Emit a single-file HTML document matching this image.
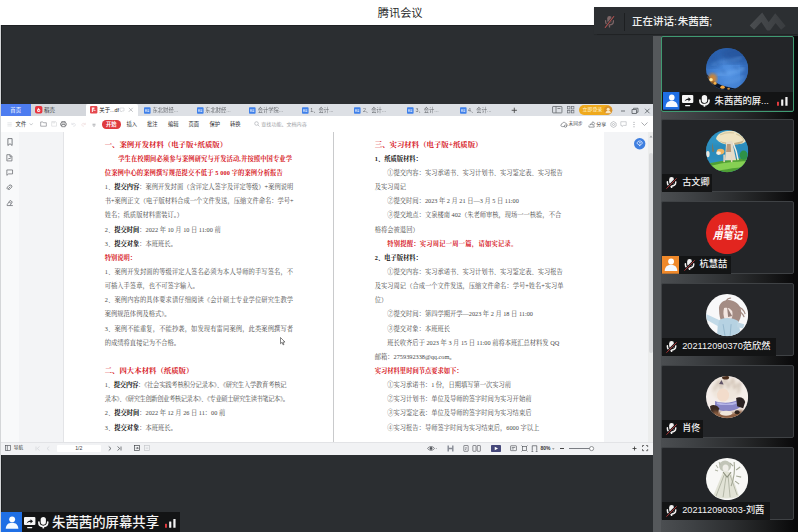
<!DOCTYPE html>
<html lang="zh"><head><meta charset="utf-8"><title>腾讯会议</title><style>
html,body{margin:0;padding:0;background:#fff}
body{font-family:"Liberation Sans","Noto Sans CJK SC",sans-serif;}
#app{position:relative;width:798px;height:532px;overflow:hidden;background:#fff}
#app div,#app svg.g,#app span{position:absolute}
#app header,#app main,#app section,#app nav,#app footer,#app aside,#app article{position:static;display:block}
#app div.tile,#app #toolbar,#app #work,#app #sharelabel,#app #speaking{position:static}
.tx{white-space:nowrap;line-height:1.3;user-select:none;font-family:"Liberation Sans","Noto Sans CJK SC",sans-serif}
article .tx{font-family:"Liberation Serif","Noto Serif CJK SC",serif}
#app .tx b{position:static;font-weight:bold;color:#0a0a0a}
.lt{white-space:nowrap}
svg.g{overflow:visible;filter:blur(.3px)}
</style></head>
<body>
<div id="app">
<svg width="0" height="0" style="position:absolute"><defs><filter id="blurA"><feGaussianBlur stdDeviation=".7"/></filter><filter id="blurB"><feGaussianBlur stdDeviation="1.600"/></filter><filter id="blurC"><feGaussianBlur stdDeviation="3.500"/></filter><radialGradient id="sky" cx=".55" cy=".6" r=".7"><stop offset="0" stop-color="#5696e6"/><stop offset=".55" stop-color="#4280d2"/><stop offset="1" stop-color="#2b65b4"/></radialGradient></defs></svg>
<header id="titlebar"><span class="tx" style="left:377.8px;top:6.13px;font-size:11.2px;color:#2a2a2a">腾讯会议</span>
</header><main id="stage"><div style="left:0px;top:25.4px;width:1px;height:506.6px;background:#d4d6d8;"></div>
<div style="left:0.9px;top:25.4px;width:797.1px;height:506.6px;background:#2b2e31;box-shadow:inset .7px .7px 0 #1c1e20;"></div>
<section id="share"><div style="left:1px;top:103.7px;width:652px;height:350.2px;background:#fff;"></div>
<nav id="tabs"><div style="left:1px;top:103.7px;width:652px;height:12.5px;background:#dde0e5;"></div>
<div style="left:1px;top:103.7px;width:30px;height:12.5px;background:#4d7cf0;"></div>
<span class="tx" style="left:10.3px;top:106.64px;font-size:5.4px;color:#fff">首页</span>
<div style="left:31px;top:103.7px;width:55px;height:12.5px;background:#d4d7dc;"></div>
<svg class="g" style="left:34.5px;top:106.3px" width="7.4" height="7.4" viewBox="0 0 20 20"><rect width="20" height="20" rx="5" fill="#e8343f"/><path d="M6 15c-1-4 1-8 5-10c-1 2 0 3 1 4c2 1 3 3 2 5c-1 2-6 3-8 1z" fill="#fff"/><circle cx="10.3" cy="12.3" r="1.8" fill="#e8343f"/></svg>
<span class="tx" style="left:44px;top:106.64px;font-size:5.4px;color:#333">稻壳</span>
<div style="left:86px;top:103.7px;width:52px;height:13px;background:#fff;border-radius:2px 2px 0 0;"></div>
<svg class="g" style="left:90.3px;top:106.2px" width="7.4" height="7.6" viewBox="0 0 20 20"><rect width="20" height="20" rx="3" fill="#e5474d"/><path d="M5 4h7v5h-4v7h-3z M9 11h6v2h-6z" fill="#fff" opacity=".9"/></svg>
<span class="tx" style="left:99.3px;top:106.64px;font-size:5.4px;color:#222">关于...df</span>
<svg class="g" style="left:119px;top:107px" width="6" height="6" viewBox="0 0 12 12" fill="none" stroke="#c9ccd1" stroke-width="1.2"><path d="M2 2h8v6h-4l-2 2v-2h-2z"/></svg>
<svg class="g" style="left:128.2px;top:107.3px" width="5.6" height="5.6" viewBox="0 0 10 10" fill="none" stroke="#9a9da2" stroke-width="1.1"><path d="M1.5 1.5l7 7M8.5 1.5l-7 7"/></svg>
<svg class="g" style="left:143.9px;top:106.5px" width="6.6" height="7" viewBox="0 0 20 20"><rect width="20" height="20" rx="2.5" fill="#3f80ea"/><path d="M4 6h4v8h-4zM10 6h6v2h-6zM10 10h6v4h-6z" fill="#fff" opacity=".85"/></svg>
<span class="tx" style="left:152.5px;top:106.71px;font-size:5.3px;color:#4a4d52;opacity:0.8">东北财经...</span>
<svg class="g" style="left:196.5px;top:106.5px" width="6.6" height="7" viewBox="0 0 20 20"><rect width="20" height="20" rx="2.5" fill="#3f80ea"/><path d="M4 6h4v8h-4zM10 6h6v2h-6zM10 10h6v4h-6z" fill="#fff" opacity=".85"/></svg>
<span class="tx" style="left:205.1px;top:106.71px;font-size:5.3px;color:#4a4d52;opacity:0.8">东北财经...</span>
<svg class="g" style="left:249.1px;top:106.5px" width="6.6" height="7" viewBox="0 0 20 20"><rect width="20" height="20" rx="2.5" fill="#3f80ea"/><path d="M4 6h4v8h-4zM10 6h6v2h-6zM10 10h6v4h-6z" fill="#fff" opacity=".85"/></svg>
<span class="tx" style="left:257.7px;top:106.71px;font-size:5.3px;color:#4a4d52;opacity:0.8">会计学院...</span>
<svg class="g" style="left:301.7px;top:106.5px" width="6.6" height="7" viewBox="0 0 20 20"><rect width="20" height="20" rx="2.5" fill="#3f80ea"/><path d="M4 6h4v8h-4zM10 6h6v2h-6zM10 10h6v4h-6z" fill="#fff" opacity=".85"/></svg>
<span class="tx" style="left:310.3px;top:106.71px;font-size:5.3px;color:#4a4d52;opacity:0.8">1、会计...</span>
<svg class="g" style="left:354.3px;top:106.5px" width="6.6" height="7" viewBox="0 0 20 20"><rect width="20" height="20" rx="2.5" fill="#3f80ea"/><path d="M4 6h4v8h-4zM10 6h6v2h-6zM10 10h6v4h-6z" fill="#fff" opacity=".85"/></svg>
<span class="tx" style="left:362.9px;top:106.71px;font-size:5.3px;color:#4a4d52;opacity:0.8">2、会计...</span>
<svg class="g" style="left:406.9px;top:106.5px" width="6.6" height="7" viewBox="0 0 20 20"><rect width="20" height="20" rx="2.5" fill="#3f80ea"/><path d="M4 6h4v8h-4zM10 6h6v2h-6zM10 10h6v4h-6z" fill="#fff" opacity=".85"/></svg>
<span class="tx" style="left:415.5px;top:106.71px;font-size:5.3px;color:#4a4d52;opacity:0.8">3、会计...</span>
<svg class="g" style="left:459.5px;top:106.5px" width="6.6" height="7" viewBox="0 0 20 20"><rect width="20" height="20" rx="2.5" fill="#3f80ea"/><path d="M4 6h4v8h-4zM10 6h6v2h-6zM10 10h6v4h-6z" fill="#fff" opacity=".85"/></svg>
<span class="tx" style="left:468.1px;top:106.71px;font-size:5.3px;color:#4a4d52;opacity:0.8">4、会计...</span>
<svg class="g" style="left:511.2px;top:106.8px" width="6.6" height="6.6" viewBox="0 0 10 10" fill="none" stroke="#444" stroke-width="1.3"><path d="M5 1v8M1 5h8"/></svg>
<svg class="g" style="left:552px;top:106.2px" width="10.5" height="7.4" viewBox="0 0 21 15" fill="none" stroke="#5c6066" stroke-width="1.5"><rect x="1" y="1" width="19" height="13" rx="1"/><path d="M8 1v13M11 5h6"/></svg>
<svg class="g" style="left:567px;top:106.2px" width="7.4" height="7.4" viewBox="0 0 15 15" fill="none" stroke="#6a6e75" stroke-width="1.4"><rect x="1" y="1" width="5" height="5"/><rect x="9" y="1" width="5" height="5"/><rect x="1" y="9" width="5" height="5"/><rect x="9" y="9" width="5" height="5"/></svg>
<div style="left:579.2px;top:105.4px;width:33px;height:9.4px;background:#efa91d;border-radius:5px;"></div>
<span class="tx" style="left:582.6px;top:106.96px;font-size:4.9px;color:#fff6d8">立即登录</span>
<svg class="g" style="left:603.6px;top:105.9px" width="8.4" height="8.4" viewBox="0 0 20 20"><circle cx="10" cy="10" r="10" fill="#d9922a"/><circle cx="10" cy="7.5" r="3.6" fill="#fbe7c0"/><path d="M3.5 17c.5-4 3-6 6.500-6s6 2 6.500 6z" fill="#fbe7c0"/></svg>
<svg class="g" style="left:620px;top:106.5px" width="32" height="8" viewBox="0 0 64 16" fill="none" stroke="#555a60" stroke-width="1.6"><path d="M2 8h8"/><path d="M24 5h9v8h-9zM27 5v-2.500h9v8h-3"/><path d="M50 3.500l9 9M59 3.500l-9 9"/></svg>
</nav><div id="toolbar"><div style="left:1px;top:116.2px;width:652px;height:15.8px;background:#fff;"></div>
<svg class="g" style="left:7.300px;top:121.900px" width="5.200" height="4.800" viewBox="0 0 12 12" preserveAspectRatio="none" stroke="#c9ccd1" stroke-width="1.1"><path d="M1 2h10M1 6h10M1 10h10"/></svg>
<span class="tx" style="left:15.6px;top:120.91px;font-size:5.3px;color:#333">文件</span>
<svg class="g" style="left:28.8px;top:122.3px" width="4.4" height="4.4" viewBox="0 0 10 10" fill="none" stroke="#a8abb0" stroke-width="1.4"><path d="M1.5 3l3.500 4l3.500-4"/></svg>
<svg class="g" style="left:40px;top:121.400px" width="7" height="5.800" viewBox="0 0 16 15" preserveAspectRatio="none" fill="none" stroke="#70747a" stroke-width="1.4"><path d="M1.500 13.500v-11h5l1.500 2h6.500v9z"/></svg>
<svg class="g" style="left:50.600px;top:121.400px" width="6.200" height="5.800" viewBox="0 0 14 14" preserveAspectRatio="none" fill="none" stroke="#d3d5d9" stroke-width="1.4"><path d="M1.500 1.500h9l2 2v9h-11z"/><path d="M4 1.500v3h5v-3"/></svg>
<svg class="g" style="left:59.800px;top:121.200px" width="6.900" height="6.300" viewBox="0 0 16 16" preserveAspectRatio="none" fill="none" stroke="#4a4d52" stroke-width="1.5"><path d="M4 5v-3.500h8v3.500"/><rect x="1.500" y="5" width="13" height="6.500" rx="1"/><path d="M4 9h8v5.500h-8z" fill="#fff"/></svg>
<svg class="g" style="left:70.600px;top:121.800px" width="5.200" height="4.800" viewBox="0 0 12 12" preserveAspectRatio="none" fill="none" stroke="#d6d8dc" stroke-width="1.4"><path d="M2 2v4h4"/><path d="M2.500 6c1-3 6-4 7.500 0c1 3-2 5-5 4.500"/></svg>
<svg class="g" style="left:81px;top:121.800px" width="5.200" height="4.800" viewBox="0 0 12 12" preserveAspectRatio="none" fill="none" stroke="#ecd6d6" stroke-width="1.4"><path d="M10 2v4h-4"/><path d="M9.500 6c-1-3-6-4-7.500 0c-1 3 2 5 5 4.500"/></svg>
<svg class="g" style="left:91.800px;top:122.6px" width="4" height="4" viewBox="0 0 8 8" fill="none" stroke="#7d8187" stroke-width="1.300"><path d="M1 2.500h6M2 4.500l2 2.500l2-2.500"/></svg>
<div style="left:102px;top:120.3px;width:18.5px;height:8.3px;background:#df3b3f;border-radius:4.2px;"></div>
<span class="tx" style="left:105.9px;top:121.01px;font-size:5.3px;color:#fff;font-weight:bold">开始</span>
<span class="tx" style="left:126.5px;top:120.91px;font-size:5.3px;color:#2d2f33">插入</span>
<span class="tx" style="left:147px;top:120.91px;font-size:5.3px;color:#2d2f33">批注</span>
<span class="tx" style="left:168px;top:120.91px;font-size:5.3px;color:#2d2f33">编辑</span>
<span class="tx" style="left:188.5px;top:120.91px;font-size:5.3px;color:#2d2f33">页面</span>
<span class="tx" style="left:209.4px;top:120.91px;font-size:5.3px;color:#2d2f33">保护</span>
<span class="tx" style="left:230px;top:120.91px;font-size:5.3px;color:#2d2f33">转换</span>
<svg class="g" style="left:253.6px;top:121.4px" width="6" height="6" viewBox="0 0 12 12" fill="none" stroke="#a9acb1" stroke-width="1.300"><circle cx="5" cy="5" r="3.600"/><path d="M7.800 7.800l3 3"/></svg>
<span class="tx" style="left:261.3px;top:121.07px;font-size:5.05px;color:#9a9da3">查找功能、文档内容</span>
<svg class="g" style="left:559.6px;top:121px" width="8" height="6.800" viewBox="0 0 16 14" fill="none" stroke="#6b6f75" stroke-width="1.400"><path d="M4.500 11.500c-4 0-4-5-.5-5.500c.5-4 7-4.500 8-.5c3.500 0 3.500 6 0 6z"/><circle cx="11" cy="10.500" r="2.400" fill="#fff"/></svg>
<span class="tx" style="left:568.6px;top:121.29px;font-size:4.7px;color:#4a4d52">未同步</span>
<svg class="g" style="left:588px;top:120.800px" width="7.600" height="7" viewBox="0 0 16 14" fill="none" stroke="#6b6f75" stroke-width="1.400"><path d="M2 9v3.500h11v-3.500"/><path d="M4 8c1-3 4-4.500 6.500-4.500v-2.500l4 4l-4 4v-2.500c-3 0-5 .5-6.500 1.500z"/></svg>
<span class="tx" style="left:596.3px;top:121.1px;font-size:5px;color:#34373b">分享</span>
<svg class="g" style="left:610.2px;top:120.800px" width="7" height="7" viewBox="0 0 14 14" fill="none" stroke="#9fa2a8" stroke-width="1.200"><path d="M7 1l5.200 3v6l-5.200 3l-5.200-3v-6z"/><circle cx="7" cy="7" r="2"/></svg>
<svg class="g" style="left:620.4px;top:121.2px" width="7" height="6.400" viewBox="0 0 14 13" fill="none" stroke="#b5b8bd" stroke-width="1.300"><path d="M1.500 1.500h11v7.500h-6l-2.500 2.500v-2.500h-2.500z"/></svg>
<svg class="g" style="left:633px;top:120.800px" width="2" height="7" viewBox="0 0 4 14" fill="#8d9096"><circle cx="2" cy="2.500" r="1.100"/><circle cx="2" cy="7" r="1.100"/><circle cx="2" cy="11.500" r="1.100"/></svg>
<svg class="g" style="left:641px;top:122.4px" width="7" height="4" viewBox="0 0 14 8" fill="none" stroke="#85888e" stroke-width="1.400"><path d="M1 1l6 6l6-6"/></svg>
</div>
<div id="work"><div style="left:1px;top:132px;width:18px;height:310.2px;background:#f8f9fa;border-right:.6px solid #e6e7ea;"></div>
<div style="left:19.3px;top:132px;width:43.4px;height:310.2px;background:#f3f4f6;"></div>
<div style="left:62.7px;top:132px;width:1px;height:310.2px;background:#e3e4e7;"></div>
<div style="left:63.6px;top:132px;width:540px;height:310.2px;background:#fff;"></div>
<div style="left:333.1px;top:132px;width:0.9px;height:310.2px;background:#c9cacc;"></div>
<div style="left:603.6px;top:132px;width:1px;height:310.2px;background:#dcdde0;"></div>
<div style="left:604.4px;top:132px;width:43.8px;height:310.2px;background:#f3f4f6;"></div>
<div style="left:648.2px;top:132px;width:4.8px;height:310.2px;background:#eceded;"></div>
<div style="left:648.6px;top:152.5px;width:4px;height:200px;background:#d9dadc;border-radius:2px;"></div>
<svg class="g" style="left:648.6px;top:134.500px" width="4" height="3" viewBox="0 0 8 6" fill="#9b9ea3"><path d="M1 5l3-4l3 4z"/></svg>
<svg class="g" style="left:633.800px;top:137.500px" width="11.400" height="11.400" viewBox="0 0 24 24"><circle cx="12" cy="12" r="12" fill="#3f7fe0"/><path d="M7 9.500c1-3.500 7-4.500 9.500-1.500c2 2.500 0 6-3 6l-1.500 3l-1-3c-3 0-5-2-4-4.500z" fill="none" stroke="#e6efff" stroke-width="1.800"/><circle cx="12.500" cy="10" r="1.600" fill="#e6efff"/></svg>
<svg class="g" style="left:6.500px;top:137.800px" width="6" height="8.400" viewBox="0 0 10 14" fill="none" stroke="#5a5d63" stroke-width="1.300"><path d="M1.500 1h7v11.500l-3.500-3l-3.500 3z"/></svg>
<svg class="g" style="left:6.200px;top:153.800px" width="6.800" height="7.600" viewBox="0 0 12 13" fill="none" stroke="#5a5d63" stroke-width="1.200"><path d="M1.500 1h6l3 3v8h-9z"/><path d="M3.500 9.500l2-2.500l1.500 1.500l1.500-2.500M7 1.500v3h3"/></svg>
<svg class="g" style="left:6px;top:169.400px" width="7.400" height="7" viewBox="0 0 13 12" fill="none" stroke="#5a5d63" stroke-width="1.200"><path d="M1.500 1.500h10v7h-7l-3 2.500z"/></svg>
<svg class="g" style="left:6px;top:184.400px" width="7.400" height="7.400" viewBox="0 0 13 13" fill="none" stroke="#5a5d63" stroke-width="1.400"><path d="M3 9.500c-2-1.500-1-3.500.5-5l2-2c2-1.500 4.500-.5 4.800 1.200c.3 1.800-.8 2.600-2.300 4l-2 1.800c-1.200.8-2.600-.5-1.400-1.800l3-3"/></svg>
<svg class="g" style="left:5.800px;top:199.400px" width="8" height="8" viewBox="0 0 14 14" fill="none" stroke="#5a5d63" stroke-width="1.200"><path d="M2 10l5-7.500l4 2.500l-4 6.500h-5zM7 11.500h5M5.500 5.500l3.500 2"/></svg>
</div>
<article id="page1"><span class="tx" style="left:104.7px;top:139.96px;font-size:7.4px;color:#d6131b;font-weight:bold">一、案例开发材料（电子版+纸质版）</span>
<span class="tx" style="left:118.2px;top:154.83px;font-size:6.27px;color:#d6131b;font-weight:bold;letter-spacing:.11px">学生在校期间必须参与案例研究与开发活动,并按照中国专业学</span>
<span class="tx" style="left:104.8px;top:168.98px;font-size:6.27px;color:#d6131b;font-weight:bold;letter-spacing:.13px">位案例中心的案例撰写规范提交不低于 5 000 字的案例分析报告</span>
<span class="tx" style="left:104.8px;top:183.12px;font-size:6.27px;color:#484848">1、<b>提交内容</b>：案例开发封面（含评定人签字及评定等级）+案例说明</span>
<span class="tx" style="left:104.8px;top:197.27px;font-size:6.27px;color:#484848">书+案例正文（电子版材料合成一个文件发送，压缩文件命名：学号+</span>
<span class="tx" style="left:104.8px;top:211.41px;font-size:6.27px;color:#484848">姓名；纸质版材料需装订。）</span>
<span class="tx" style="left:104.8px;top:225.56px;font-size:6.27px;color:#484848">2、<b>提交时间</b>：2022 年 10 月 10 日 11:00 前</span>
<span class="tx" style="left:104.8px;top:239.7px;font-size:6.27px;color:#484848">3、<b>提交对象</b>：本班班长。</span>
<span class="tx" style="left:104.8px;top:253.85px;font-size:6.27px;color:#d6131b;font-weight:bold">特别说明：</span>
<span class="tx" style="left:104.8px;top:267.99px;font-size:6.27px;color:#484848;letter-spacing:.12px">1、案例开发封面的等级评定人签名必须为本人导师的手写签名，不</span>
<span class="tx" style="left:104.8px;top:282.14px;font-size:6.27px;color:#484848">可插入手签章，也不可签字输入。</span>
<span class="tx" style="left:104.8px;top:296.28px;font-size:6.27px;color:#484848;letter-spacing:.12px">2、案例内容的具体要求请仔细阅读《会计硕士专业学位研究生教学</span>
<span class="tx" style="left:104.8px;top:310.43px;font-size:6.27px;color:#484848">案例规范体例及格式》。</span>
<span class="tx" style="left:104.8px;top:324.57px;font-size:6.27px;color:#484848;letter-spacing:.12px">3、案例不能重复，不能抄袭，如发现有雷同案例，此类案例撰写者</span>
<span class="tx" style="left:104.8px;top:338.72px;font-size:6.27px;color:#484848">的成绩将直接记为不合格。</span>
<span class="tx" style="left:104.7px;top:366.28px;font-size:7.4px;color:#d6131b;font-weight:bold">二、四大本材料（纸质版）</span>
<span class="tx" style="left:104.8px;top:381.15px;font-size:6.27px;color:#484848;letter-spacing:-.2px">1、<b>提交内容</b>：《社会实践考核积分记录本》、《研究生入学教育考核记</span>
<span class="tx" style="left:104.8px;top:395.3px;font-size:6.27px;color:#484848;letter-spacing:-.4px">录本》、《研究生创新创业考核记录本》、《专业硕士研究生读书笔记本》。</span>
<span class="tx" style="left:104.8px;top:409.44px;font-size:6.27px;color:#484848">2、<b>提交时间</b>：2022 年 12 月 26 日 11：00 前</span>
<span class="tx" style="left:104.8px;top:423.59px;font-size:6.27px;color:#484848">3、<b>提交对象</b>：本班班长。</span>
</article><article id="page2"><span class="tx" style="left:374.8px;top:139.96px;font-size:7.4px;color:#d6131b;font-weight:bold">三、实习材料（电子版+纸质版）</span>
<span class="tx" style="left:374.8px;top:154.83px;font-size:6.27px;color:#111;font-weight:bold">1、纸质版材料：</span>
<span class="tx" style="left:387.3px;top:168.98px;font-size:6.27px;color:#484848">①提交内容：实习承诺书、实习计划书、实习鉴定表、实习报告</span>
<span class="tx" style="left:374.8px;top:183.12px;font-size:6.27px;color:#484848">及实习周记</span>
<span class="tx" style="left:387.3px;top:197.27px;font-size:6.27px;color:#484848">②提交时间：2023 年 2 月 21 日—3 月 5 日 11:00</span>
<span class="tx" style="left:387.3px;top:211.41px;font-size:6.27px;color:#484848">③提交地点：文泉楼南 402（朱老师审核，现场一一核验，不合</span>
<span class="tx" style="left:374.8px;top:225.56px;font-size:6.27px;color:#484848">格将会被退回）</span>
<span class="tx" style="left:387.3px;top:239.7px;font-size:6.27px;color:#d6131b;font-weight:bold;letter-spacing:.24px">特别提醒：实习周记一周一篇，请如实记录。</span>
<span class="tx" style="left:374.8px;top:253.85px;font-size:6.27px;color:#111;font-weight:bold">2、电子版材料：</span>
<span class="tx" style="left:387.3px;top:267.99px;font-size:6.27px;color:#484848">①提交内容：实习承诺书、实习计划书、实习鉴定表、实习报告</span>
<span class="tx" style="left:374.8px;top:282.14px;font-size:6.27px;color:#484848">及实习周记（合成一个文件发送，压缩文件命名：学号+姓名+实习单</span>
<span class="tx" style="left:374.8px;top:296.28px;font-size:6.27px;color:#484848">位）</span>
<span class="tx" style="left:387.3px;top:310.43px;font-size:6.27px;color:#484848">②提交时间：第四学期开学—2023 年 2 月 18 日 11:00</span>
<span class="tx" style="left:387.3px;top:324.57px;font-size:6.27px;color:#484848">③提交对象：本班班长</span>
<span class="tx" style="left:387.3px;top:338.72px;font-size:6.27px;color:#484848">班长收齐后于 2023 年 3 月 15 日 11:00 前将本班汇总材料发 QQ</span>
<span class="tx" style="left:374.8px;top:352.86px;font-size:6.27px;color:#484848">邮箱：2759392338@qq.com。</span>
<span class="tx" style="left:374.8px;top:367.01px;font-size:6.27px;color:#d6131b;font-weight:bold">实习材料里时间节点要求如下：</span>
<span class="tx" style="left:387.3px;top:381.15px;font-size:6.27px;color:#484848">①实习承诺书：1 份，日期填写第一次实习前</span>
<span class="tx" style="left:387.3px;top:395.3px;font-size:6.27px;color:#484848">②实习计划书：单位及导师的签字时间为实习开始前</span>
<span class="tx" style="left:387.3px;top:409.44px;font-size:6.27px;color:#484848">③实习鉴定表：单位及导师的签字时间为实习结束后</span>
<span class="tx" style="left:387.3px;top:423.59px;font-size:6.27px;color:#484848">④实习报告：导师签字时间为实习结束后，6000 字以上</span>
</article><svg class="g" style="left:280.300px;top:337px" width="5.500" height="8.500" viewBox="0 0 11 17"><path d="M1 1v12.500l3-2.800l2.200 5l1.800-.8l-2.200-4.800h4.200z" fill="#fff" stroke="#222" stroke-width="1.100"/></svg>
<footer id="status"><div style="left:1px;top:442.2px;width:652px;height:11.7px;background:#f1f2f4;border-top:.5px solid #e2e3e6;"></div>
<svg class="g" style="left:5.400px;top:445.400px" width="6.200" height="6.200" viewBox="0 0 12 12" fill="none" stroke="#4b4e54" stroke-width="1.200"><rect x="1" y="1" width="10" height="10"/><path d="M4.500 1v10"/></svg>
<span class="tx" style="left:13.8px;top:445.49px;font-size:4.7px;color:#333">导航</span>
<svg class="g" style="left:35.200px;top:446px" width="5" height="5" viewBox="0 0 10 10" fill="none" stroke="#cfd1d5" stroke-width="1.300"><path d="M2 1v8M9 1l-4.500 4l4.500 4"/></svg>
<svg class="g" style="left:46.200px;top:446px" width="4" height="5" viewBox="0 0 8 10" fill="none" stroke="#cfd1d5" stroke-width="1.300"><path d="M6.500 1l-4.500 4l4.500 4"/></svg>
<div style="left:56.7px;top:444.6px;width:44.3px;height:7.8px;background:#fff;border-radius:1px;"></div>
<span class="lt" style="left:56.700px;top:444.600px;width:44.300px;height:7.800px;line-height:7.800px;font-size:5.200px;text-align:center;color:#444">1/2</span><svg class="g" style="left:108.400px;top:446px" width="4" height="5" viewBox="0 0 8 10" fill="none" stroke="#44474c" stroke-width="1.400"><path d="M1.500 1l4.500 4l-4.500 4"/></svg>
<svg class="g" style="left:117px;top:446px" width="5" height="5" viewBox="0 0 10 10" fill="none" stroke="#44474c" stroke-width="1.400"><path d="M1 1l4.500 4l-4.500 4M8 1v8"/></svg>
<svg class="g" style="left:134.200px;top:445.400px" width="6" height="6.200" viewBox="0 0 12 12" fill="none" stroke="#3b3e43" stroke-width="1.300"><rect x="1" y="1" width="10" height="10"/><path d="M3.500 6h5M6.500 4l2 2l-2 2"/></svg>
<svg class="g" style="left:144.200px;top:445.400px" width="6" height="6.200" viewBox="0 0 12 12" fill="none" stroke="#c4c6ca" stroke-width="1.300"><rect x="1" y="1" width="10" height="10"/><path d="M3.500 6h5"/></svg>
<svg class="g" style="left:426.500px;top:445.400px" width="10" height="6.400" viewBox="0 0 20 13" fill="none" stroke="#4f5258" stroke-width="1.400"><path d="M1 7c3-5 11-5 14 0c-3 5-11 5-14 0z"/><circle cx="8" cy="7" r="2.200" fill="#4f5258"/><path d="M17.500 6l1.200 1.500l1.200-1.500z" fill="#4f5258" stroke="none"/></svg>
<svg class="g" style="left:446.600px;top:445px" width="7" height="7" viewBox="0 0 14 14" fill="#868a94"><path d="M1 1h2.800v4.600h6.400v-4.600h2.800v12h-2.800v-4.600h-6.400v4.600h-2.800z"/></svg>
<svg class="g" style="left:463px;top:445.200px" width="6" height="6.800" viewBox="0 0 12 14" fill="none" stroke="#4f5258" stroke-width="1.300"><rect x="1.500" y="1" width="9" height="12" rx="1"/><path d="M4 6h4M4 9h2.500"/></svg>
<svg class="g" style="left:472.400px;top:445.200px" width="9" height="6.800" viewBox="0 0 18 14" fill="none" stroke="#4f5258" stroke-width="1.300"><rect x="1.500" y="1" width="6.500" height="12" rx="1"/><rect x="10.500" y="1" width="6.500" height="12" rx="1"/></svg>
<svg class="g" style="left:490.800px;top:445px" width="10" height="7.200" viewBox="0 0 20 14"><rect width="20" height="14" rx="1.500" fill="#46487a"/><path d="M7.500 3.500l6.500 3.500l-6.500 3.500z" fill="#fff"/></svg>
<svg class="g" style="left:510px;top:445.400px" width="7" height="6.400" viewBox="0 0 14 13" fill="none" stroke="#4f5258" stroke-width="1.300"><rect x="1" y="1.500" width="12" height="10" rx="1"/><path d="M3.500 5h7M3.500 8h4"/></svg>
<svg class="g" style="left:520.500px;top:445px" width="7" height="7" viewBox="0 0 14 14" fill="none" stroke="#4f5258" stroke-width="1.300"><rect x="3" y="3" width="8" height="8"/><path d="M1 1l2 2M13 1l-2 2M1 13l2-2M13 13l-2-2"/></svg>
<svg class="g" style="left:531px;top:445px" width="7" height="7" viewBox="0 0 14 14" fill="none" stroke="#4f5258" stroke-width="1.400"><path d="M2.500 11.500v-10h9v10M1 13h3.500M9.500 13h3.500"/></svg>
<span class="lt" style="left:540.500px;top:445px;font-size:5px;line-height:7px;color:#333;font-weight:bold">80%</span><svg class="g" style="left:552.200px;top:447.600px" width="2.600" height="2" viewBox="0 0 6 4" fill="#888"><path d="M0 0h6l-3 4z"/></svg>
<div style="left:559.6px;top:448.1px;width:4.2px;height:0.9px;background:#444;"></div>
<div style="left:569.3px;top:448.2px;width:21px;height:0.7px;background:#7a7d83;"></div>
<svg class="g" style="left:589.200px;top:446px" width="5.200" height="5.200" viewBox="0 0 10 10"><circle cx="5" cy="5" r="4" fill="#fff" stroke="#55585e" stroke-width="1.200"/></svg>
<svg class="g" style="left:631.600px;top:446px" width="5" height="5" viewBox="0 0 10 10" fill="none" stroke="#333" stroke-width="1.600"><path d="M5 1v8M1 5h8"/></svg>
<svg class="g" style="left:642px;top:445.400px" width="6.200" height="6.200" viewBox="0 0 12 12" fill="none" stroke="#333" stroke-width="1.400"><path d="M1 4v-3h3M8 1h3v3M11 8v3h-3M4 11h-3v-3"/></svg>
</footer></section><div id="sharelabel"><div style="left:1.4px;top:511.7px;width:178.2px;height:20.3px;background:#131415;"></div>
<div style="left:1.4px;top:511.7px;width:20.6px;height:20.3px;background:#1f6fe5;"></div>
<svg class="g" style="left:2.7px;top:513.5px" width="17.1" height="17.3" viewBox="0 0 20 20" preserveAspectRatio="none"><rect width="20" height="20" fill="none"/><circle cx="10.700" cy="6.200" r="3.450" fill="#fff"/><path d="M3.200 17c.2-4.600 3-7 7.400-7s7.200 2.400 7.400 7z" fill="#f4f9ff"/></svg>
<svg class="g" style="left:24.4px;top:516.9px" width="11.4" height="11.4" viewBox="0 0 24 24"><rect x="0" y="0" width="24" height="17" rx="2.200" fill="#f6f6f6"/><path d="M5.500 13.500c1.800-4.200 4.800-6 8.300-6v-2.900l5.200 4.500l-5.200 4.500v-2.900c-3.300 0-6 .7-8.300 2.800z" fill="#17181a"/><rect x="6.500" y="21.300" width="11" height="2.500" rx="1" fill="#f6f6f6"/></svg>
<svg class="g" style="left:38.4px;top:516.8px" width="10.6" height="11.48" viewBox="0 0 21.800 23.600"><rect x="5.500" y="0" width="10.800" height="15.800" rx="5.400" fill="#f6f6f6"/><path d="M1.800 10.300v1.200c0 10.600 18.200 10.600 18.200 0v-1.200" fill="none" stroke="#f6f6f6" stroke-width="3.400" stroke-linecap="round"/><path d="M10.900 19.500v4" stroke="#f6f6f6" stroke-width="3.400"/></svg>
<span class="tx" style="left:52px;top:514.42px;font-size:13.4px;color:#f3f3f3;font-weight:500">朱茜茜的屏幕共享</span>
<svg class="g" style="left:165.4px;top:518.8px" width="10.78" height="8.82" viewBox="0 0 22 18"><rect x="0" y="9.500" width="4" height="8.500" rx=".8" fill="#e23c40"/><rect x="8.500" y="5" width="4.400" height="13" rx=".8" fill="#f2f2f2"/><rect x="17" y="0" width="4.600" height="18" rx=".8" fill="#f2f2f2"/></svg>
</div>
<aside id="panel"><div style="left:653px;top:36px;width:145px;height:496px;background:linear-gradient(90deg,#55585b 0,#55585b 7.600px,#4b4e51 8.200px,#3e4144 40px,#2d2f31 78px,#1b1c1d 112px,#09090a 142px);"></div>
<div class="tile"><div style="left:660.5px;top:35.9px;width:133.9px;height:76.3px;background:#232528;border:1.300px solid #409a72;border-radius:2px;box-sizing:border-box;"></div>
<svg class="g av" style="left:705.9px;top:47.9px" width="42.2" height="42.2" viewBox="0 0 42 42"><clipPath id="cp0"><circle cx="21" cy="21" r="21"/></clipPath><g clip-path="url(#cp0)"><rect width="42" height="42" fill="url(#sky)"/><ellipse cx="30" cy="6" rx="18" ry="9" fill="#214f96" opacity=".8" filter="url(#blurC)"/><ellipse cx="6" cy="10" rx="9" ry="9" fill="#275aa4" opacity=".8" filter="url(#blurC)"/><ellipse cx="40" cy="24" rx="5" ry="12" fill="#2a5ca6" opacity=".7" filter="url(#blurC)"/><path d="M6 17c8-5 18-3 30-8" stroke="#5e98de" stroke-width="2.500" fill="none" opacity=".5" filter="url(#blurB)"/><path d="M10 27c8-2 18-1 28-7" stroke="#6aa6ec" stroke-width="3.500" fill="none" opacity=".55" filter="url(#blurB)"/><path d="M18 35c6-1 12-2 20-7" stroke="#5f9ce4" stroke-width="2.500" fill="none" opacity=".5" filter="url(#blurB)"/><path d="M9 12l4 5M20 9l5 4M27 18l6 3M15 22l5 3" stroke="#2d62ae" stroke-width="2" fill="none" opacity=".45" filter="url(#blurB)"/><path d="M-1 24C3 29 7 33 12 35.500C17 38 24 39.500 32 40.500L40 43L-1 43Z" fill="#111726" filter="url(#blurA)"/><ellipse cx="6.500" cy="30.500" rx="4.500" ry="5" fill="#d9862a" opacity=".9" filter="url(#blurB)"/><ellipse cx="5" cy="31.500" rx="1.800" ry="1.600" fill="#ffe9a0" filter="url(#blurA)"/><ellipse cx="9" cy="35" rx="1.500" ry="1.500" fill="#f2b04a" filter="url(#blurA)"/><ellipse cx="16.500" cy="39" rx="2.200" ry="1.600" fill="#efa540" filter="url(#blurA)"/><ellipse cx="22.500" cy="40.500" rx="1.400" ry="1" fill="#c98a3a" filter="url(#blurA)"/></g></svg>
<div style="left:662px;top:92.1px;width:131px;height:17.7px;background:#131415;"></div>
<svg class="g" style="left:662.6px;top:92.1px" width="16.4" height="17.7" viewBox="0 0 20 20" preserveAspectRatio="none"><rect width="20" height="20" fill="#1f6fe5"/><circle cx="10.700" cy="6.200" r="3.450" fill="#fff"/><path d="M3.200 17c.2-4.600 3-7 7.400-7s7.200 2.400 7.400 7z" fill="#f4f9ff"/></svg>
<svg class="g" style="left:681.8px;top:95.2px" width="11.3" height="11.3" viewBox="0 0 24 24"><rect x="0" y="0" width="24" height="17" rx="2.200" fill="#f6f6f6"/><path d="M5.500 13.500c1.800-4.200 4.800-6 8.300-6v-2.900l5.200 4.500l-5.200 4.500v-2.900c-3.300 0-6 .7-8.300 2.800z" fill="#17181a"/><rect x="6.500" y="21.300" width="11" height="2.500" rx="1" fill="#f6f6f6"/></svg>
<svg class="g" style="left:699.1px;top:94.9px" width="10.9" height="11.8" viewBox="0 0 21.800 23.600"><rect x="5.500" y="0" width="10.800" height="15.800" rx="5.400" fill="#f6f6f6"/><path d="M1.800 10.300v1.200c0 10.600 18.200 10.600 18.200 0v-1.200" fill="none" stroke="#f6f6f6" stroke-width="3.400" stroke-linecap="round"/><path d="M10.900 19.500v4" stroke="#f6f6f6" stroke-width="3.400"/></svg>
<span class="tx" style="left:714.6px;top:95.1px;font-size:9.3px;color:#f3f3f3;font-weight:500">朱茜茜的屏...</span>
<svg class="g" style="left:777px;top:96.7px" width="10.78" height="8.82" viewBox="0 0 22 18"><rect x="0" y="9.500" width="4" height="8.500" rx=".8" fill="#e23c40"/><rect x="8.500" y="5" width="4.400" height="13" rx=".8" fill="#f2f2f2"/><rect x="17" y="0" width="4.600" height="18" rx=".8" fill="#f2f2f2"/></svg>
</div>
<div class="tile"><div style="left:661px;top:119px;width:133px;height:73.4px;background:#232528;border:.8px solid #3f4245;border-radius:2px;box-sizing:border-box;"></div>
<svg class="g av" style="left:705.9px;top:129.9px" width="42.2" height="42.2" viewBox="0 0 42 42"><clipPath id="cp1"><circle cx="21" cy="21" r="21"/></clipPath><g clip-path="url(#cp1)"><rect width="42" height="42" fill="#2e93c4"/><rect y="14" width="42" height="16" fill="#2a8cbc" filter="url(#blurB)"/><path d="M-2 34c10-2 30-5 46-7v17h-46z" fill="#4f9f34"/><path d="M0 37c12-4 28-6 42-6v5c-14 2-28 3-42 8z" fill="#86d052" filter="url(#blurA)"/><ellipse cx="37.500" cy="25" rx="4" ry="4.500" fill="#2e9246" filter="url(#blurA)"/><path d="M10 9c1-6 9-9 18-8c8 1 12 5 12 10c-3 3-7 4-11 2c-5 3-14 2-19-4z" fill="#efe4c2" filter="url(#blurA)"/><path d="M12 10c5 3 16 5 26 0l-2 3c-7 3-16 3-24-3z" fill="#c4b087" filter="url(#blurA)"/><path d="M14 5c4-2 9-3 14-2M30 4c3 1 6 3 8 6" stroke="#d8caa2" stroke-width="1.200" fill="none" filter="url(#blurA)"/><path d="M20 12l6-1l4 19h-11z" fill="#e6dcc9" filter="url(#blurA)"/><path d="M21 14l3.500 0l.5 8h-5z" fill="#a88462" opacity=".75" filter="url(#blurA)"/><path d="M27 13l3 8l2 9" stroke="#f4eee2" stroke-width="1.500" fill="none" filter="url(#blurA)"/><path d="M6.200 12.500l1.600 9l-1.300.4z" fill="#a06e34" filter="url(#blurA)"/><ellipse cx="1.800" cy="24" rx="1.800" ry="3.200" fill="#ece8e0" filter="url(#blurA)"/><ellipse cx="14.500" cy="21.500" rx="3.800" ry="2.800" fill="#f0b45e" filter="url(#blurA)"/><ellipse cx="12.500" cy="23" rx="2.400" ry="1.800" fill="#f8eedc" filter="url(#blurA)"/><rect x="17.300" y="24.500" width="1.500" height="7.500" fill="#ead8c0" filter="url(#blurA)"/><rect x="24.800" y="24.500" width="1.500" height="7.500" fill="#ead8c0" filter="url(#blurA)"/></g></svg>
<div style="left:662px;top:174.1px;width:50px;height:17.7px;background:#131415;"></div>
<svg class="g" style="left:666.4px;top:176.7px" width="11" height="12" viewBox="0 0 22 24"><rect x="6.300" y="0" width="9.600" height="14.600" rx="4.800" fill="#f3f1f1"/><path d="M2.800 9.500v1.300c0 9.800 16.600 9.800 16.600 0v-1.300" fill="none" stroke="#f3f1f1" stroke-width="3" stroke-linecap="round"/><path d="M11.100 18v4" stroke="#f3f1f1" stroke-width="3"/><path d="M1.500 23l19.500-20" stroke="#131415" stroke-width="5"/><path d="M1.500 22.800l19.300-19.600" stroke="#b5393b" stroke-width="1.900" stroke-linecap="round"/></svg>
<span class="tx" style="left:682.2px;top:177.16px;font-size:9.2px;color:#f3f3f3;font-weight:500">古文卿</span>
</div>
<div class="tile"><div style="left:661px;top:201px;width:133px;height:73.4px;background:#232528;border:.8px solid #3f4245;border-radius:2px;box-sizing:border-box;"></div>
<svg class="g av" style="left:705.9px;top:211.9px" width="42.2" height="42.2" viewBox="0 0 42 42"><clipPath id="cp2"><circle cx="21" cy="21" r="21"/></clipPath><g clip-path="url(#cp2)"><rect width="42" height="42" fill="#e2251f"/></g></svg>
<span class="tx" style="left:717.4px;top:223.67px;font-size:6.3px;color:#fff;font-weight:bold;letter-spacing:.3px;transform:skewX(-12deg);transform-origin:0 100%">认真听</span>
<span class="tx" style="left:712.4px;top:230.13px;font-size:9.8px;color:#fff;font-weight:bold;letter-spacing:.2px;transform:skewX(-12deg);transform-origin:0 100%">用笔记</span>
<svg class="g" style="left:662px;top:256.1px" width="17" height="17.7" viewBox="0 0 20 20" preserveAspectRatio="none"><rect width="20" height="20" fill="#f0892a"/><circle cx="10.700" cy="6.200" r="3.450" fill="#fff"/><path d="M3.200 17c.2-4.600 3-7 7.400-7s7.200 2.400 7.400 7z" fill="#f4f9ff"/></svg>
<div style="left:679px;top:256.1px;width:51.7px;height:17.7px;background:#131415;"></div>
<svg class="g" style="left:683.9px;top:258.7px" width="11" height="12" viewBox="0 0 22 24"><rect x="6.300" y="0" width="9.600" height="14.600" rx="4.800" fill="#f3f1f1"/><path d="M2.800 9.500v1.300c0 9.800 16.600 9.800 16.600 0v-1.300" fill="none" stroke="#f3f1f1" stroke-width="3" stroke-linecap="round"/><path d="M11.100 18v4" stroke="#f3f1f1" stroke-width="3"/><path d="M1.500 23l19.500-20" stroke="#131415" stroke-width="5"/><path d="M1.500 22.800l19.300-19.600" stroke="#b5393b" stroke-width="1.900" stroke-linecap="round"/></svg>
<span class="tx" style="left:699.6px;top:259.16px;font-size:9.2px;color:#f3f3f3;font-weight:500">杭慧喆</span>
</div>
<div class="tile"><div style="left:661px;top:283px;width:133px;height:73.4px;background:#232528;border:.8px solid #3f4245;border-radius:2px;box-sizing:border-box;"></div>
<svg class="g av" style="left:705.9px;top:293.9px" width="42.2" height="42.2" viewBox="0 0 42 42"><clipPath id="cp3"><circle cx="21" cy="21" r="21"/></clipPath><g clip-path="url(#cp3)"><rect width="42" height="42" fill="#f8f8f9"/><path d="M13 16c-1-8 7-12 14-9c6 2 9 8 8 14c-1 5-3 8-6 10l-13-2c-2-4-3-8-3-13z" fill="#a48c84" filter="url(#blurA)"/><path d="M30 12c4 1 8 4 9 8M32 17c3 1 5 3 6 6M20 7c1-2 3-3 5-3" stroke="#a38a82" stroke-width="1.200" fill="none" filter="url(#blurA)"/><path d="M18 14c3-1 6 0 8 3c1 3 0 8-2 10l-5-1c-2-4-2-8-1-12z" fill="#f3e6e1" filter="url(#blurA)"/><path d="M21 13l5 9l-4 1z" fill="#96807a" filter="url(#blurA)"/><path d="M12 27c4-4 14-4 20 0l3 15h-24z" fill="#b6d2e2" filter="url(#blurA)"/><path d="M0 20l13 6l-1 6l-11-6z" fill="#c2dae8" filter="url(#blurA)"/><path d="M31 28l7 2l-1 4l-6-1z" fill="#bed6e4" filter="url(#blurA)"/><path d="M17 30l2 12M25 30l-1 12" stroke="#8fb2c8" stroke-width=".8" fill="none" filter="url(#blurA)"/></g></svg>
<div style="left:662px;top:338.1px;width:113.5px;height:17.7px;background:#131415;"></div>
<svg class="g" style="left:666.4px;top:340.7px" width="11" height="12" viewBox="0 0 22 24"><rect x="6.300" y="0" width="9.600" height="14.600" rx="4.800" fill="#f3f1f1"/><path d="M2.800 9.500v1.300c0 9.800 16.600 9.800 16.600 0v-1.300" fill="none" stroke="#f3f1f1" stroke-width="3" stroke-linecap="round"/><path d="M11.100 18v4" stroke="#f3f1f1" stroke-width="3"/><path d="M1.500 23l19.500-20" stroke="#131415" stroke-width="5"/><path d="M1.500 22.800l19.300-19.600" stroke="#b5393b" stroke-width="1.900" stroke-linecap="round"/></svg>
<span class="tx" style="left:682.2px;top:341.16px;font-size:9.2px;color:#f3f3f3;font-weight:500">202112090370范欣然</span>
</div>
<div class="tile"><div style="left:661px;top:365px;width:133px;height:73.4px;background:#232528;border:.8px solid #3f4245;border-radius:2px;box-sizing:border-box;"></div>
<svg class="g av" style="left:705.9px;top:375.9px" width="42.2" height="42.2" viewBox="0 0 42 42"><clipPath id="cp4"><circle cx="21" cy="21" r="21"/></clipPath><g clip-path="url(#cp4)"><rect width="42" height="42" fill="#f5eeea"/><ellipse cx="20" cy="13" rx="15" ry="12" fill="#efe6dc" filter="url(#blurB)"/><path d="M8 14l5-9l2 7l4-10l3 9l5-8l1 9l6-5l-2 10" stroke="#c2b2a4" stroke-width="1.600" fill="none" opacity=".8" filter="url(#blurB)"/><ellipse cx="19.500" cy="1.500" rx="3.500" ry="2" fill="#4b2f1e" filter="url(#blurA)"/><path d="M13 8l2.500-4l2 4.500z" fill="#5f5266" filter="url(#blurA)"/><ellipse cx="17" cy="19" rx="6" ry="6.500" fill="#f2dccb" filter="url(#blurA)"/><path d="M9 25c5 2 17 3 24-2l1 8c-7 5-19 5-25 1z" fill="#8886c6" filter="url(#blurA)"/><path d="M11 27c6 2 14 2 21-1" stroke="#b4b4e6" stroke-width="1.800" fill="none" filter="url(#blurA)"/><path d="M30 22c4-2 8 0 9 4l-2 6l-6-2z" fill="#2c2220" filter="url(#blurA)"/><path d="M4 30c3-2 7-1 9 2l-1 6l-7-1z" fill="#3a2a24" filter="url(#blurA)"/><path d="M8 34c8 4 20 4 28-1l2 10h-32z" fill="#8a5c3c" filter="url(#blurB)"/><ellipse cx="20" cy="37" rx="6" ry="2.500" fill="#efe6dc" filter="url(#blurA)"/><ellipse cx="31" cy="36" rx="2.500" ry="2" fill="#2e211c" filter="url(#blurA)"/></g></svg>
<div style="left:662px;top:420.1px;width:41px;height:17.7px;background:#131415;"></div>
<svg class="g" style="left:666.4px;top:422.7px" width="11" height="12" viewBox="0 0 22 24"><rect x="6.300" y="0" width="9.600" height="14.600" rx="4.800" fill="#f3f1f1"/><path d="M2.800 9.500v1.300c0 9.800 16.600 9.800 16.600 0v-1.300" fill="none" stroke="#f3f1f1" stroke-width="3" stroke-linecap="round"/><path d="M11.100 18v4" stroke="#f3f1f1" stroke-width="3"/><path d="M1.500 23l19.500-20" stroke="#131415" stroke-width="5"/><path d="M1.500 22.800l19.300-19.600" stroke="#b5393b" stroke-width="1.900" stroke-linecap="round"/></svg>
<span class="tx" style="left:682.2px;top:423.16px;font-size:9.2px;color:#f3f3f3;font-weight:500">肖佟</span>
</div>
<div class="tile"><div style="left:661px;top:447px;width:133px;height:73.4px;background:#232528;border:.8px solid #3f4245;border-radius:2px;box-sizing:border-box;"></div>
<svg class="g av" style="left:705.9px;top:457.9px" width="42.2" height="42.2" viewBox="0 0 42 42"><clipPath id="cp5"><circle cx="21" cy="21" r="21"/></clipPath><g clip-path="url(#cp5)"><rect width="42" height="42" fill="#f8f8f6"/><ellipse cx="19" cy="8" rx="6" ry="5.500" fill="#c2c5b8" filter="url(#blurA)"/><ellipse cx="19.500" cy="10" rx="3" ry="3.500" fill="#efeee8" filter="url(#blurA)"/><path d="M17 14c3-1 6-1 8 1l8 23c-8 3-18 3-26 0z" fill="#e2e3d6" filter="url(#blurA)"/><path d="M18 17l-8 21M20 18l-3 21M22 18l2 21M24 17l7 20" stroke="#a9ad9c" stroke-width=".8" fill="none" filter="url(#blurA)"/><path d="M17 14l4 5l4-5" stroke="#8c907e" stroke-width="1" fill="none" filter="url(#blurA)"/><path d="M28 4c1 8 0 16-3 24M30 12l4-3M30 18l5 1M29 23l4 3M27 8l-3-3" stroke="#a4a896" stroke-width="1.100" fill="none" filter="url(#blurA)"/><path d="M10 7l2 3M9 12l3 1M13 4l1 3" stroke="#b0b4a4" stroke-width="1" fill="none" filter="url(#blurA)"/><path d="M16 40h10" stroke="#c8cab8" stroke-width="1.500" filter="url(#blurA)"/></g></svg>
<div style="left:662px;top:502.1px;width:108px;height:17.7px;background:#131415;"></div>
<svg class="g" style="left:666.4px;top:504.7px" width="11" height="12" viewBox="0 0 22 24"><rect x="6.300" y="0" width="9.600" height="14.600" rx="4.800" fill="#f3f1f1"/><path d="M2.800 9.500v1.300c0 9.800 16.600 9.800 16.600 0v-1.300" fill="none" stroke="#f3f1f1" stroke-width="3" stroke-linecap="round"/><path d="M11.100 18v4" stroke="#f3f1f1" stroke-width="3"/><path d="M1.500 23l19.500-20" stroke="#131415" stroke-width="5"/><path d="M1.500 22.800l19.300-19.600" stroke="#b5393b" stroke-width="1.900" stroke-linecap="round"/></svg>
<span class="tx" style="left:682.2px;top:505.16px;font-size:9.2px;color:#f3f3f3;font-weight:500">202112090303-刘茜</span>
</div>
</aside><div id="speaking"><div style="left:594px;top:6.8px;width:204px;height:27.6px;background:#2c2f32;box-shadow:0 .5px 1px rgba(0,0,0,.25);"></div>
<svg class="g" style="left:604px;top:14.800px" width="11" height="14" viewBox="0 0 22 28"><rect x="6.500" y="2" width="9" height="14" rx="4.500" fill="#7d6667"/><path d="M3.200 11.500v1.500c0 9 15.600 9 15.600 0v-1.500" fill="none" stroke="#7d6667" stroke-width="2.600" stroke-linecap="round"/><path d="M11 20.500v4.500" stroke="#7d6667" stroke-width="2.600"/><path d="M2.500 25l17-22" stroke="#2c2f32" stroke-width="4.500"/><path d="M2.500 25l17-22" stroke="#b0514f" stroke-width="2.200" stroke-linecap="round"/></svg>
<div style="left:624px;top:12.5px;width:0.8px;height:18.5px;background:#1d1f21;"></div>
<span class="tx" style="left:631.9px;top:15.18px;font-size:10.5px;color:#f0f0f0;font-weight:500">正在讲话:</span>
<span class="tx" style="left:677.7px;top:15.18px;font-size:10.5px;color:#f0f0f0;font-weight:500">朱茜茜;</span>
<svg class="g" style="left:744px;top:8px" width="48" height="26" viewBox="744 8 48 26" fill="none"><defs><linearGradient id="lg" gradientUnits="userSpaceOnUse" x1="748" y1="0" x2="788" y2="0"><stop offset="0" stop-color="#4b4e51"/><stop offset="1" stop-color="#383b3e"/></linearGradient><clipPath id="lc"><rect x="744" y="8" width="48" height="22.600"/></clipPath></defs><path clip-path="url(#lc)" d="M751.900 27.600L761.800 17.200L768.600 27.400L775.400 18.200L783.400 27.800" stroke="url(#lg)" stroke-width="6" stroke-linejoin="miter" stroke-miterlimit="10"/></svg>
</div>
</main>
</div>
</body></html>
